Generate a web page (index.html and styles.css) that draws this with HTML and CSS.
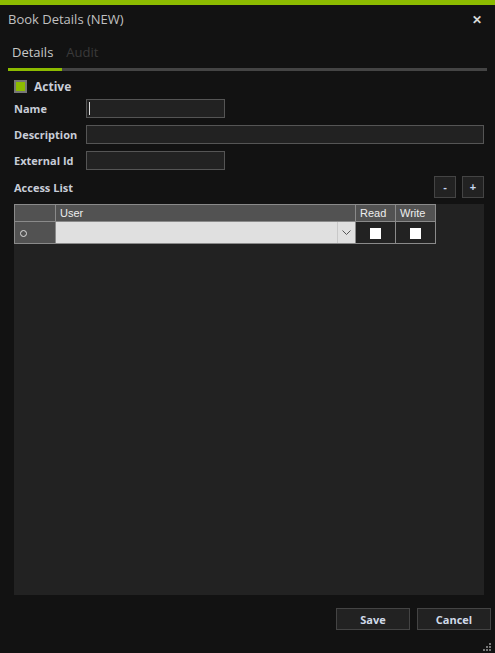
FILE: index.html
```html
<!DOCTYPE html>
<html lang="en">
<head>
  <meta charset="UTF-8">
  <title>Book Details (NEW)</title>
  <link rel="stylesheet" href="styles.css">
</head>
<body>
  <div class="window">
    <div class="accent"></div>
    <div class="titlebar">
      <span class="title">Book Details (NEW)</span>
      <span class="close">&#x2715;</span>
    </div>

    <div class="tabs">
      <span class="tab active">Details</span>
      <span class="tab">Audit</span>
    </div>
    <div class="tab-line"><div class="tab-line-on"></div></div>

    <div class="form">
      <label class="check-row">
        <span class="check on"></span>
        <span class="label">Active</span>
      </label>
      <div class="field">
        <span class="label">Name</span>
        <div class="input short"><span class="caret"></span></div>
      </div>
      <div class="field">
        <span class="label">Description</span>
        <div class="input long"></div>
      </div>
      <div class="field">
        <span class="label">External Id</span>
        <div class="input short"></div>
      </div>
      <div class="list-head">
        <span class="label">Access List</span>
        <div class="list-btns">
          <button class="sq-btn">-</button>
          <button class="sq-btn">+</button>
        </div>
      </div>

      <div class="grid">
        <table class="grid-table">
          <tr class="grid-hdr">
            <th class="rowhdr"></th>
            <th class="col-user">User</th>
            <th class="col-chk">Read</th>
            <th class="col-chk">Write</th>
          </tr>
          <tr class="grid-row">
            <td class="rowhdr"><span class="new-mark"></span></td>
            <td class="combo">
              <div class="combo-box">
                <span class="combo-arrow">
                  <svg width="9" height="5" viewBox="0 0 9 5"><path d="M0.5 0.5 L4.5 4.5 L8.5 0.5" fill="none" stroke="#555" stroke-width="1"/></svg>
                </span>
              </div>
            </td>
            <td class="chk-cell"><span class="box"></span></td>
            <td class="chk-cell"><span class="box"></span></td>
          </tr>
        </table>
      </div>
    </div>

    <div class="footer">
      <button class="btn">Save</button>
      <button class="btn">Cancel</button>
    </div>
    <svg class="grip" width="8" height="8" viewBox="0 0 8 8">
      <rect x="6" y="0" width="2" height="2" fill="#777"/>
      <rect x="3" y="3" width="2" height="2" fill="#777"/>
      <rect x="6" y="3" width="2" height="2" fill="#777"/>
      <rect x="0" y="6" width="2" height="2" fill="#777"/>
      <rect x="3" y="6" width="2" height="2" fill="#777"/>
      <rect x="6" y="6" width="2" height="2" fill="#777"/>
    </svg>
  </div>
</body>
</html>
```

FILE: styles.css
```css
body {
  margin: 0;
  background: #121212;
  font-family: "Open Sans", "Noto Sans", sans-serif;
  color: #c8c8c8;
}
.window {
  position: relative;
  width: 495px;
  height: 653px;
  display: flex;
  flex-direction: column;
  background: #121212;
}
.accent {
  height: 5px;
  background: #8cbb00;
}
.titlebar {
  display: flex;
  justify-content: space-between;
  align-items: center;
  padding: 4px 13px 0 8px;
  height: 20px;
}
.title {
  font-size: 13px;
  color: #c0c0c0;
}
.close {
  font-size: 12px;
  font-weight: 700;
  color: #d8d8d8;
}
.tabs {
  display: flex;
  gap: 13px;
  padding: 14px 0 0 12px;
  height: 24px;
}
.tab {
  font-size: 13px;
  color: #3a3a3a;
}
.tab.active {
  color: #c8c8c8;
}
.tab-line {
  margin: 1px 8px 0 8px;
  height: 3px;
  background: #444;
}
.tab-line-on {
  width: 54px;
  height: 3px;
  background: #8cbb00;
}
.form {
  padding: 0 11px 0 14px;
  display: flex;
  flex-direction: column;
}
.label {
  font-size: 11px;
  font-weight: 700;
  color: #c8cdd8;
}
.check-row {
  display: flex;
  align-items: center;
  gap: 7px;
  height: 17px;
  margin-top: 7px;
}
.check-row .label {
  font-size: 12px;
}
.check {
  width: 9px;
  height: 9px;
  border: 2px solid #777;
  background: #8cbb00;
}
.field {
  display: flex;
  align-items: center;
  height: 26px;
}
.field .label {
  width: 72px;
}
.input {
  height: 17px;
  border: 1px solid #555;
  background: #222;
  display: flex;
  align-items: center;
}
.input.short {
  width: 137px;
}
.input.long {
  flex: 1;
}
.caret {
  width: 1px;
  height: 13px;
  margin-left: 2px;
  background: #ddd;
}
.list-head {
  display: flex;
  justify-content: space-between;
  align-items: flex-end;
  height: 28px;
  margin-top: -3px;
}
.list-head .label {
  padding-bottom: 3px;
}
.list-btns {
  display: flex;
  gap: 6px;
}
.sq-btn {
  width: 22px;
  height: 22px;
  padding: 0;
  border: 1px solid #444;
  background: #222;
  color: #c8d8f0;
  font-family: "Liberation Sans", sans-serif;
  font-size: 11px;
  font-weight: 700;
}
.grid {
  margin-top: 6px;
  height: 391px;
  background: #222;
}
.grid-table {
  border-collapse: collapse;
  font-family: "Liberation Sans", sans-serif;
  font-size: 11px;
}
.grid-table th,
.grid-table td {
  border: 1px solid #8a8a8a;
  padding: 0;
}
.grid-hdr th {
  height: 16px;
  background: #525252;
  color: #eee;
  font-weight: 400;
  text-align: left;
  padding-left: 4px;
}
.grid-hdr th.rowhdr {
  padding-left: 0;
}
.rowhdr {
  width: 40px;
  background: #525252;
}
.col-user {
  width: 295px;
}
.col-chk {
  width: 35px;
}
.grid-row td {
  height: 21px;
}
.grid-row td.rowhdr {
  text-align: left;
}
.new-mark {
  display: inline-block;
  width: 5px;
  height: 5px;
  border: 1.5px solid #ddd;
  border-radius: 50%;
  margin-left: 5px;
  vertical-align: middle;
}
.combo {
  background: #e0e0e0;
}
.combo-box {
  display: flex;
  justify-content: flex-end;
  height: 21px;
}
.combo-arrow {
  width: 17px;
  border-left: 1px solid #c8c8c8;
  display: flex;
  align-items: center;
  justify-content: center;
}
.chk-cell {
  background: #222;
  text-align: center;
}
.box {
  display: inline-block;
  width: 11px;
  height: 11px;
  background: #fff;
  vertical-align: middle;
}
.footer {
  display: flex;
  justify-content: flex-end;
  gap: 7px;
  padding: 13px 4px 0 0;
}
.btn {
  width: 74px;
  height: 22px;
  border: 1px solid #444;
  background: #222;
  color: #d0dae8;
  font-family: "Open Sans", sans-serif;
  font-size: 11px;
  font-weight: 700;
}
.grip {
  position: absolute;
  right: 4px;
  bottom: 2px;
}
```
